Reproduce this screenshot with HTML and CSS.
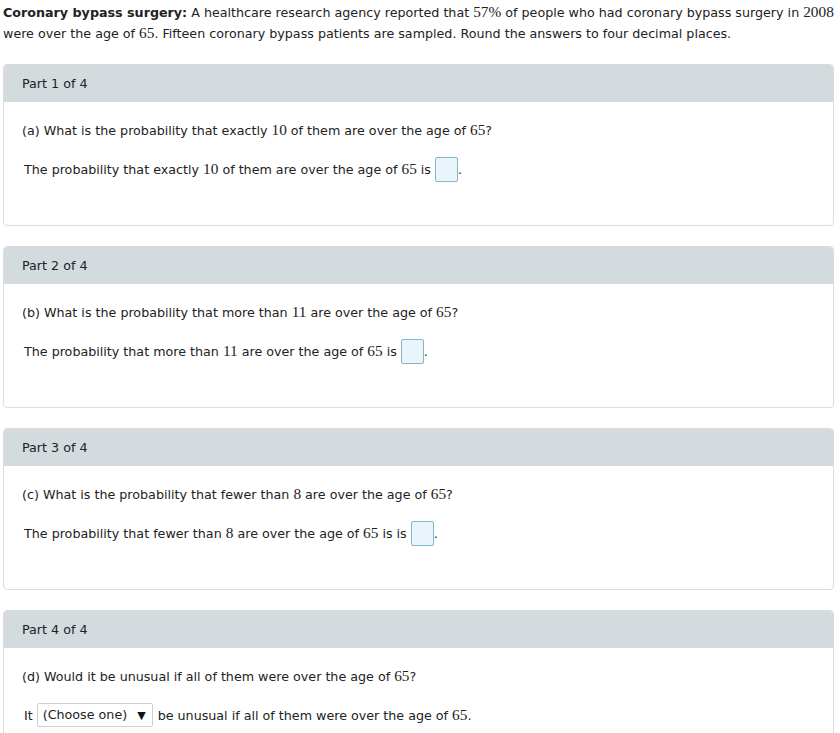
FILE: index.html
```html
<!DOCTYPE html>
<html>
<head>
<meta charset="utf-8">
<link rel="stylesheet" href="styles.css">
</head>
<body>
<div class="page">
  <p class="intro"><b>Coronary bypass surgery:</b> A healthcare research agency reported that <span class="m">57%</span> of people who had coronary bypass surgery in <span class="m">2008</span> were over the age of <span class="m">65</span>. Fifteen coronary bypass patients are sampled. Round the answers to four decimal places.</p>

  <div class="card">
    <div class="card-head">Part 1 of 4</div>
    <div class="card-body">
      <p class="q">(a) What is the probability that exactly <span class="m">10</span> of them are over the age of <span class="m">65</span>?</p>
      <p class="ans">The probability that exactly <span class="m">10</span> of them are over the age of <span class="m">65</span> is <span class="box"></span>.</p>
    </div>
  </div>

  <div class="card">
    <div class="card-head">Part 2 of 4</div>
    <div class="card-body">
      <p class="q">(b) What is the probability that more than <span class="m">11</span> are over the age of <span class="m">65</span>?</p>
      <p class="ans">The probability that more than <span class="m">11</span> are over the age of <span class="m">65</span> is <span class="box"></span>.</p>
    </div>
  </div>

  <div class="card">
    <div class="card-head">Part 3 of 4</div>
    <div class="card-body">
      <p class="q">(c) What is the probability that fewer than <span class="m">8</span> are over the age of <span class="m">65</span>?</p>
      <p class="ans">The probability that fewer than <span class="m">8</span> are over the age of <span class="m">65</span> is is <span class="box"></span>.</p>
    </div>
  </div>

  <div class="card">
    <div class="card-head">Part 4 of 4</div>
    <div class="card-body">
      <p class="q">(d) Would it be unusual if all of them were over the age of <span class="m">65</span>?</p>
      <p class="ans">It <span class="select">(Choose one) <span class="arrow">&#9660;</span></span> be unusual if all of them were over the age of <span class="m">65</span>.</p>
    </div>
  </div>
</div>
</body>
</html>
```

FILE: styles.css
```css
html, body {
  margin: 0;
  padding: 0;
  background: #fff;
}
body {
  font-family: "DejaVu Sans", Verdana, sans-serif;
  font-size: 12.7px;
  color: #222;
}
.page {
  padding: 2px 6px 0 3px;
}
.intro {
  margin: 0 0 20px 0;
  line-height: 20px;
}
.intro b {
  font-weight: bold;
}
.m {
  font-family: "Liberation Serif", "Times New Roman", serif;
  font-size: 15.3px;
}
.card {
  border: 1px solid #dcdcdc;
  border-radius: 4px;
  margin-bottom: 20px;
  height: 162px;
  box-sizing: border-box;
  overflow: hidden;
}
.card-head {
  background: #d3dbdf;
  height: 37px;
  line-height: 37px;
  padding-left: 18px;
  box-sizing: border-box;
}
.card-body {
  padding: 18px 18px 0 18px;
}
.card-body p {
  margin: 0;
  line-height: 20px;
}
.q {
  margin-bottom: 15px !important;
}
.ans {
  padding-left: 2px;
  height: 26px;
  line-height: 26px !important;
}
.box {
  display: inline-block;
  vertical-align: middle;
  width: 21px;
  height: 23px;
  border: 1px solid #80b9c5;
  border-radius: 2px;
  background: #e9f5fa;
  margin: -3px 0 0 0;
}
.select {
  display: inline-block;
  vertical-align: middle;
  height: 22px;
  line-height: 22px;
  border: 1px solid #d0d0d0;
  border-radius: 2px;
  padding: 0 6px 0 5px;
  margin: -3px 1px 0 0;
  background: #fff;
  color: #222;
}
.arrow {
  font-size: 11px;
  margin-left: 6px;
  color: #111;
}
```
